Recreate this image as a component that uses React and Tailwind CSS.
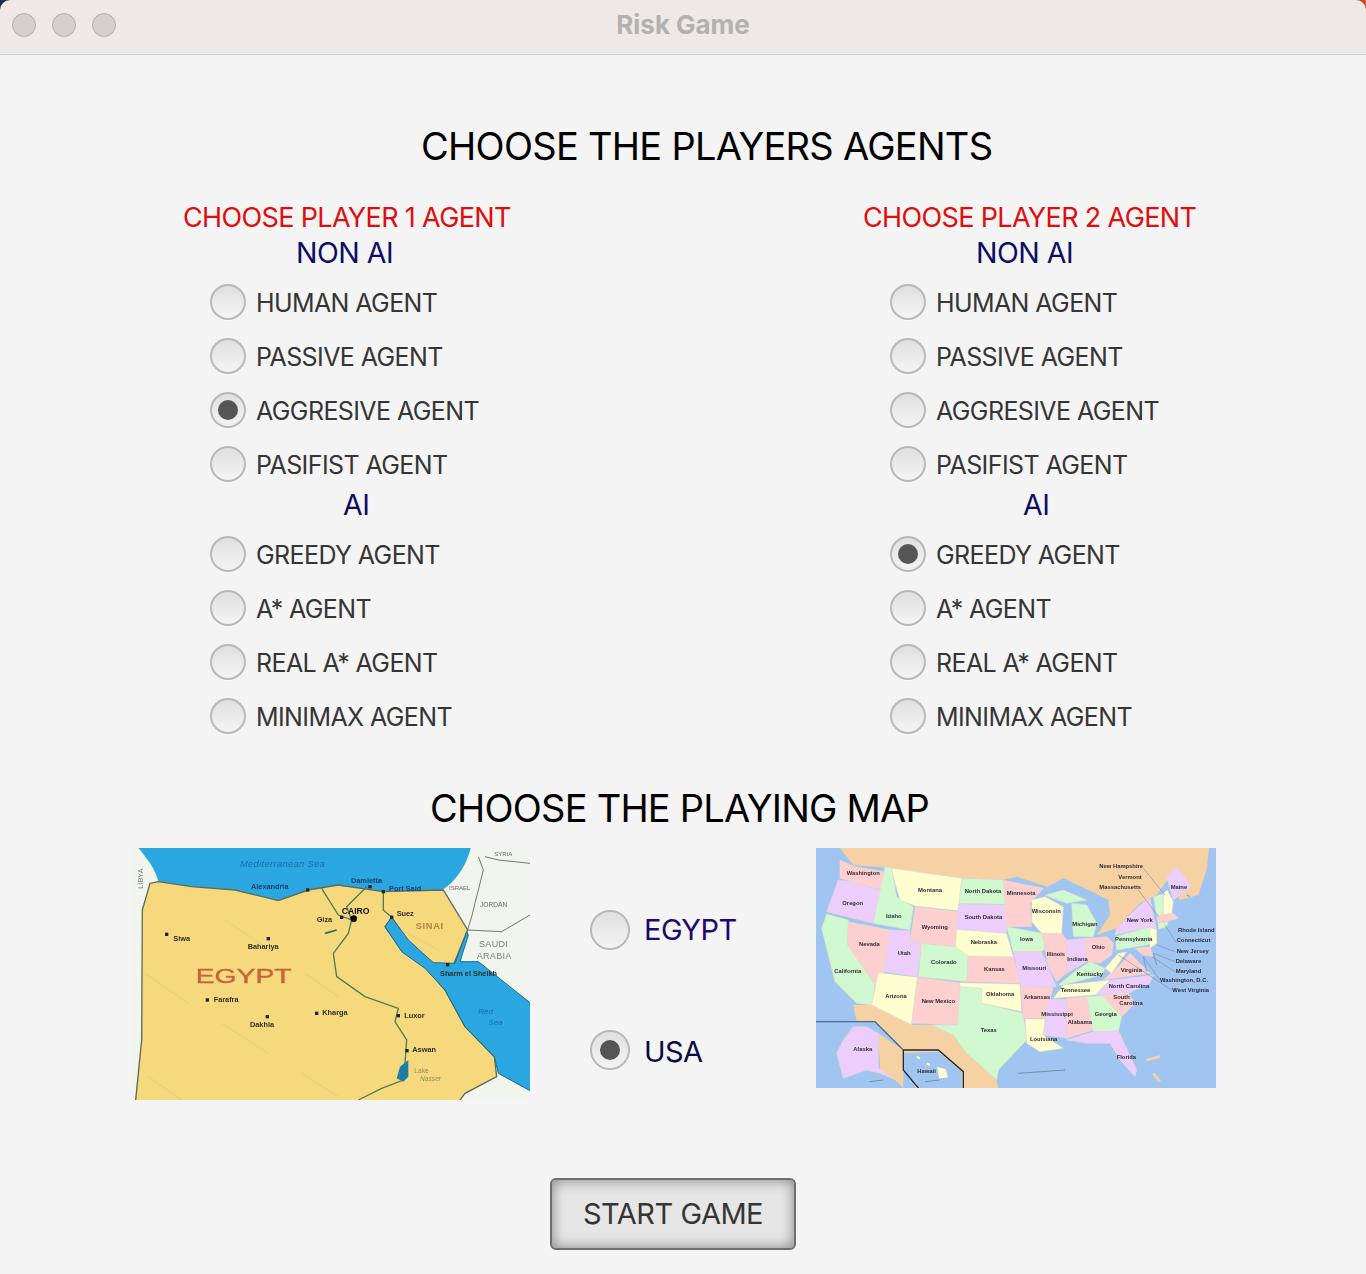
const FONT = { fontFamily: 'Inter, "Noto Sans", sans-serif' };

function Radio({ checked, big }) {
  return (
    <span className={`flex shrink-0 items-center justify-center rounded-full border-[2px] border-[#b9b9b9] bg-linear-to-b from-[#e0e0e0] to-[#f4f4f4] shadow-[0_1px_0_#fafafa] ${big ? 'h-[40px] w-[40px]' : 'h-[36px] w-[36px]'}`}>
      {checked && <span className="h-[20px] w-[20px] rounded-full bg-[#555555]" />}
    </span>
  );
}

function AgentRow({ label, checked }) {
  return (
    <div className="flex h-[54px] items-center gap-[10px] pl-[27px] text-[25px] tracking-[-0.6px] text-[#353535]">
      <Radio checked={checked} />
      <span className="pt-[4px]">{label}</span>
    </div>
  );
}

function Column({ n, selected }) {
  return (
    <div className="w-[680px] pl-[183px]">
      <div className="h-[36px] text-[27px] leading-[36px] tracking-[-0.65px] whitespace-nowrap text-[#e00d0d]">CHOOSE PLAYER {n} AGENT</div>
      <div className="h-[34px] pl-[113px] text-[28.5px] leading-[34px] tracking-[-0.5px] text-[#0d0d66]">NON AI</div>
      <div className="mt-[5px]">
        {['HUMAN AGENT', 'PASSIVE AGENT', 'AGGRESIVE AGENT', 'PASIFIST AGENT'].map((l) => (
          <AgentRow key={l} label={l} checked={selected === l} />
        ))}
      </div>
      <div className="h-[36px] pl-[160px] text-[28.5px] leading-[28px] tracking-[-0.5px] text-[#0d0d66]">AI</div>
      <div>
        {['GREEDY AGENT', 'A* AGENT', 'REAL A* AGENT', 'MINIMAX AGENT'].map((l) => (
          <AgentRow key={l} label={l} checked={selected === l} />
        ))}
      </div>
    </div>
  );
}

function EgyptMap() {
  const dots = [[125, 283, 'Siwa', 145, 297], [430, 296, 'Bahariya', 368, 320], [247, 480, 'Farafra', 266, 480], [427, 530, 'Dakhla', 375, 554], [575, 520, 'Kharga', 592, 518], [820, 527, 'Luxor', 838, 528], [846, 632, 'Aswan', 862, 630], [650, 232, 'Giza', 575, 240], [548, 150, 'Alexandria', 378, 140], [775, 155, 'Port Said', 792, 147], [735, 140, 'Damietta', 678, 122], [800, 232, 'Suez', 815, 220], [968, 374, 'Sharm el Sheikh', 945, 402]];
  return (
    <svg width="399" height="252" viewBox="18 24 1197 756" className="shrink-0">
      <defs><filter id="eg" x="-5%" y="-5%" width="110%" height="110%"><feGaussianBlur stdDeviation="1.7" /></filter></defs>
      <g filter="url(#eg)">
        <rect x="0" y="0" width="1240" height="800" fill="#f2f4ee" />
        <path d="M30 10 L1040 10 C1030 70 990 130 950 150 L775 155 L640 135 L550 150 L460 182 L330 150 L200 140 L100 125 C90 80 60 50 30 10Z" fill="#29a7e0" />
        <path d="M75 130 L100 125 L200 140 L330 150 L460 182 L550 150 L640 135 L775 155 L955 150 L1028 270 L985 375 L900 375 L830 330 L780 260 L800 232 L900 380 L960 450 L1020 560 L1108 650 L1115 710 L1020 760 L990 800 L30 800 L50 600 L52 210Z" fill="#f6d97c" stroke="#5f6a58" strokeWidth="4" />
        <path d="M780 260 L800 232 L850 300 L925 368 L990 370 L1025 275 L1030 285 L1005 365 L1060 365 L1230 500 L1230 760 L1120 700 L1108 650 L1020 560 L960 450 L900 385 L830 335Z" fill="#29a7e0" stroke="#24677f" strokeWidth="3" />
        <path d="M955 150 L1028 270 L1130 275 L1215 225 M1060 50 L1075 90 L1040 230 L1028 270 M1080 50 L1120 60 L1215 70" fill="none" stroke="#74786f" strokeWidth="3" />
        <path d="M590 145 L640 225 L680 240 L670 280 L625 340 L635 410 L720 470 L820 505 L810 545 L845 600 L840 670 L835 720 L770 745 L700 780" fill="none" stroke="#4b7d58" strokeWidth="4" />
        <path d="M725 140 L665 200 L680 240 M775 155 L775 210 L800 232" fill="none" stroke="#4b7d58" strokeWidth="4" />
        <path d="M825 680 L850 660 L850 710 L835 725 L815 715Z" fill="#1f7ea8" />
        <path d="M600 280 L635 270" stroke="#2d6b55" strokeWidth="5" />
        <g stroke="#e7cf82" strokeWidth="4" opacity="0.8">
          <path d="M300 240 L420 320 M540 400 L640 470 M290 550 L430 640 M530 700 L640 770 M70 710 L170 780 M60 400 L190 490 M830 270 L940 330" />
        </g>
        <circle cx="686" cy="236" r="10" fill="#111" />
        {dots.map(([x, y]) => <rect key={`${x}-${y}`} x={x - 5} y={y - 5} width="10" height="10" fill="#222" />)}
        {dots.map(([x, y, t, tx, ty]) => (
          <text key={t} x={tx} y={ty + 7} fontSize="22" fontWeight="700" fill={t === 'Alexandria' || t === 'Port Said' || t === 'Damietta' ? '#123e70' : '#2f2e26'} fontFamily="Liberation Sans, sans-serif">{t}</text>
        ))}
        <text x="650" y="222" fontSize="26" fontWeight="700" fill="#111" fontFamily="Liberation Sans, sans-serif">CAIRO</text>
        <text x="212" y="428" fontSize="60" fill="#c8623a" textLength="288" lengthAdjust="spacingAndGlyphs" stroke="#c8623a" strokeWidth="1" fontFamily="Liberation Sans, sans-serif">EGYPT</text>
        <text x="872" y="268" fontSize="28" letterSpacing="2" fontWeight="700" fill="#b5813f" fontFamily="Liberation Sans, sans-serif">SINAI</text>
        <text x="345" y="82" fontSize="28" fontStyle="italic" letterSpacing="1" fill="#1a6ea8" fontFamily="Liberation Sans, sans-serif">Mediterranean Sea</text>
        <text x="1060" y="522" fontSize="24" fontStyle="italic" fill="#1a6ea8" fontFamily="Liberation Sans, sans-serif">Red</text>
        <text x="1090" y="556" fontSize="24" fontStyle="italic" fill="#1a6ea8" fontFamily="Liberation Sans, sans-serif">Sea</text>
        <text x="1062" y="320" fontSize="27" fill="#7c7f78" letterSpacing="1" fontFamily="Liberation Sans, sans-serif">SAUDI</text>
        <text x="1055" y="356" fontSize="27" fill="#7c7f78" letterSpacing="1" fontFamily="Liberation Sans, sans-serif">ARABIA</text>
        <text x="1065" y="200" fontSize="20" fill="#66685f" fontFamily="Liberation Sans, sans-serif">JORDAN</text>
        <text x="972" y="150" fontSize="18" fill="#66685f" fontFamily="Liberation Sans, sans-serif">ISRAEL</text>
        <text x="1108" y="48" fontSize="18" fill="#66685f" fontFamily="Liberation Sans, sans-serif">SYRIA</text>
        <text x="868" y="698" fontSize="20" fill="#8b8d6e" fontFamily="Liberation Sans, sans-serif">Lake</text>
        <text x="885" y="722" fontSize="20" fontStyle="italic" fill="#8b8d6e" fontFamily="Liberation Sans, sans-serif">Nasser</text>
        <text x="0" y="0" transform="translate(54 146) rotate(-90)" fontSize="22" fill="#7c7f78" fontFamily="Liberation Sans, sans-serif">LIBYA</text>
      </g>
    </svg>
  );
}

const PINK = '#fdcfcf', PURPLE = '#eccdfb', GREEN = '#d0f9cf', YELLOW = '#fefed0';
const STATES = [
  [PINK, '90,60 135,80 225,95 215,150 125,125 90,115'],
  [PURPLE, '85,120 125,125 215,152 190,250 50,215'],
  [GREEN, '50,222 115,240 112,310 195,435 185,495 140,490 75,425 35,265'],
  [PINK, '115,245 240,270 222,400 200,440 112,315'],
  [GREEN, '225,80 245,85 260,170 310,200 300,270 190,250'],
  [YELLOW, '245,85 455,115 445,212 315,198 270,180 255,130'],
  [PINK, '315,200 445,215 437,320 300,305'],
  [PURPLE, '240,270 300,272 300,305 335,310 322,410 222,395'],
  [GREEN, '335,310 475,325 470,425 325,410'],
  [YELLOW, '205,398 322,412 305,555 185,495'],
  [PINK, '322,412 450,428 443,555 305,550'],
  [GREEN, '450,440 515,445 515,490 640,520 650,600 565,690 560,720 470,640 430,585 365,555 443,555'],
  [YELLOW, '450,428 630,432 635,515 515,490 515,445 450,440'],
  [PINK, '475,348 610,350 630,430 470,425'],
  [YELLOW, '440,268 590,280 610,350 475,348 437,320'],
  [PURPLE, '445,192 590,195 590,280 440,268'],
  [GREEN, '455,115 578,120 588,193 447,190'],
  [PINK, '578,120 700,145 660,190 665,260 590,260'],
  [GREEN, '590,260 695,280 715,315 695,335 610,335'],
  [PURPLE, '610,335 695,335 730,420 740,440 632,442'],
  [PINK, '632,442 730,442 705,535 640,535'],
  [YELLOW, '645,537 705,537 700,585 760,625 690,635 650,610'],
  [PURPLE, '715,478 770,478 770,595 700,585'],
  [PINK, '770,475 830,470 850,570 770,595'],
  [GREEN, '830,470 900,465 935,530 925,575 850,575'],
  [PURPLE, '770,600 850,575 925,572 980,690 975,710 930,660 900,610 830,610'],
  [PINK, '875,465 955,460 975,490 935,530'],
  [PURPLE, '855,465 905,420 1030,405 1020,430 955,460'],
  [YELLOW, '730,475 760,435 900,420 855,465'],
  [GREEN, '745,435 800,390 840,365 885,385 875,405 760,435'],
  [PINK, '880,420 925,380 960,340 1020,400'],
  [YELLOW, '885,385 925,340 950,335 905,400'],
  [PINK, '825,295 890,290 910,310 905,345 870,370 830,365'],
  [PURPLE, '770,300 825,295 830,365 770,400'],
  [PINK, '695,280 755,280 770,300 770,400 740,425 715,380'],
  [YELLOW, '665,180 705,170 760,200 755,280 695,280 665,245'],
  [GREEN, '785,190 830,195 860,250 850,290 790,290'],
  [GREEN, '705,165 760,150 830,180 770,190 730,175'],
  [GREEN, '915,290 1020,260 1040,310 920,330'],
  [PURPLE, '920,265 990,195 1020,175 1040,270 1020,260 915,285'],
  [PURPLE, '1070,110 1100,80 1145,140 1090,180'],
  [GREEN, '1030,170 1058,162 1060,225 1040,225'],
  [YELLOW, '1060,160 1072,150 1090,185 1085,222 1060,225'],
  [PINK, '1040,225 1090,220 1105,235 1045,250'],
  [GREEN, '1045,250 1075,245 1070,260 1045,268'],
  [YELLOW, '1020,262 1040,270 1040,310 1020,325'],
  [PINK, '975,325 1020,320 1030,350 1000,345'],
  [PURPLE, '130,560 170,560 205,580 205,685 260,720 210,700 170,690 100,715 80,640 100,600'],
];
const USA_LABELS = [
  ['Washington', 110, 105], ['Oregon', 97, 194], ['Idaho', 228, 233], ['Montana', 324, 156], ['North Dakota', 464, 160], ['Minnesota', 590, 164], ['Wisconsin', 665, 220], ['South Dakota', 464, 237], ['Wyoming', 335, 267], ['Nevada', 147, 318], ['Utah', 263, 345], ['Colorado', 363, 372], ['Nebraska', 482, 311], ['Iowa', 630, 304], ['Illinois', 710, 347], ['Indiana', 772, 364], ['Ohio', 845, 328], ['Michigan', 787, 258], ['New York', 950, 247], ['Pennsylvania', 915, 302], ['California', 73, 398], ['Kansas', 522, 392], ['Missouri', 637, 390], ['Kentucky', 800, 407], ['Virginia', 932, 397], ['Arizona', 226, 474], ['New Mexico', 335, 490], ['Oklahoma', 528, 467], ['Arkansas', 642, 476], ['Tennessee', 752, 456], ['North Carolina', 896, 444], ['South', 910, 476], ['Carolina', 928, 496], ['Mississippi', 694, 528], ['Alabama', 773, 551], ['Georgia', 854, 529], ['Texas', 512, 575], ['Louisiana', 660, 602], ['Florida', 920, 658], ['Alaska', 130, 632], ['Hawaii', 322, 698], ['New Hampshire', 868, 84], ['Vermont', 925, 116], ['Massachusetts', 868, 146], ['Maine', 1082, 146], ['Rhode Island', 1104, 276], ['Connecticut', 1100, 306], ['New Jersey', 1100, 338], ['Delaware', 1097, 368], ['Maryland', 1097, 398], ['Washington, D.C.', 1050, 425], ['West Virginia', 1087, 455],
];

function UsaMap() {
  return (
    <svg width="400" height="240" viewBox="18 24 1200 720" className="shrink-0">
      <defs><filter id="us" x="-5%" y="-5%" width="110%" height="110%"><feGaussianBlur stdDeviation="1.9" /></filter></defs>
      <g filter="url(#us)">
        <rect x="0" y="0" width="1240" height="770" fill="#9fc5f0" />
        <path d="M70 0 L1200 0 L1190 90 L1165 165 L1110 180 L1072 120 L1040 165 L990 190 L920 265 L860 285 L900 225 L895 180 L835 150 L760 115 L712 140 L620 110 L580 120 L455 115 L245 85 L130 75Z" fill="#f5d1a3" />
        <path d="M130 495 L185 495 L305 555 L365 555 L430 585 L470 640 L560 720 L570 770 L325 770 L280 630 L195 545 L140 545Z" fill="#f5d1a3" />
        <path d="M205 580 L280 630 L280 744 L255 720 L210 690Z" fill="#f5d1a3" />
        {STATES.map(([c, p], i) => <polygon key={i} points={p} fill={c} stroke="#e6dccb" strokeWidth="1.5" />)}
        <path d="M1000 350 L1010 395 M1030 340 L1040 375 M1130 165 L1140 170" stroke="#7fa7dc" strokeWidth="4" />
        <path d="M18 545 L195 545 L280 630" fill="none" stroke="#4c6c90" strokeWidth="4" />
        <path d="M280 640 L385 635 L455 695 L455 744 L330 744 L285 690Z" fill="#9fc5f0" />
        <path d="M280 630 L385 630 L460 695 L460 760 M280 630 L280 690 L330 750" fill="none" stroke="#1e2a3a" strokeWidth="4" />
        <path d="M320 650 L330 655 M350 670 L360 675 M385 685 L405 690 L410 710 L390 712Z" stroke="#fefed0" strokeWidth="6" fill="#fefed0" />
        <path d="M1010 660 L1050 650 M1030 700 L1050 725" stroke="#f5d1a3" strokeWidth="8" />
        <path d="M625 700 L765 690 M178 725 L220 720 M345 725 L390 720" stroke="#5e6f82" strokeWidth="2" />
        <path d="M1000 85 L1065 165 M985 150 L1045 230 M1065 255 L1100 310 M1040 315 L1095 335 M1030 340 L1095 365 M1025 350 L1095 395 M1000 350 L1050 420 M925 345 L1085 450" stroke="#6f7f91" strokeWidth="1.5" fill="none" />
        {USA_LABELS.map(([t, x, y]) => (
          <text key={t} x={x} y={y} fontSize="17.5" fontWeight="700" fill="#2f2a33" fontFamily="Liberation Sans, sans-serif">{t}</text>
        ))}
      </g>
    </svg>
  );
}

export default function App() {
  return (
    <div className="h-[1274px] w-[1366px] overflow-hidden bg-[linear-gradient(90deg,#1d2a4d_50%,#c8501c_50%)]" style={FONT}>
      <div className="relative flex h-[55px] items-center rounded-t-[10px] border-b border-[#cdcdcd] bg-[#eee9e6] pb-[4px] pl-[12px]">
        <div className="flex gap-[16px]">
          <span className="h-[24px] w-[24px] rounded-full border border-[#b4afab] bg-[#d5d0cd]" />
          <span className="h-[24px] w-[24px] rounded-full border border-[#b4afab] bg-[#d5d0cd]" />
          <span className="h-[24px] w-[24px] rounded-full border border-[#b4afab] bg-[#d5d0cd]" />
        </div>
        <div className="absolute inset-x-0 top-[9px] text-center text-[26px] leading-[32px] font-bold tracking-[-0.05px] text-[#b5b1ae]">Risk Game</div>
      </div>
      <div className="h-[1219px] bg-[#f4f4f4]">
        <div className="pt-[67px] pl-[421px] text-[38px] leading-[48px] tracking-[-0.72px] whitespace-nowrap text-black">CHOOSE THE PLAYERS AGENTS</div>
        <div className="mt-[30px] flex">
          <Column n={1} selected="AGGRESIVE AGENT" />
          <Column n={2} selected="GREEDY AGENT" />
        </div>
        <div className="mt-[41px] pl-[430px] text-[38px] leading-[48px] tracking-[-0.77px] whitespace-nowrap text-black">CHOOSE THE PLAYING MAP</div>
        <div className="mt-[16px] flex items-start pl-[131px]">
          <EgyptMap />
          <div className="ml-[60px] flex w-[226px] flex-col pt-[61px]">
            <div className="flex items-center gap-[14px] text-[29px] leading-[40px] tracking-[-0.55px] text-[#1f0a6b]">
              <Radio big /><span className="pt-[1px]">EGYPT</span>
            </div>
            <div className="mt-[78px] flex items-center gap-[14px] text-[29px] leading-[40px] tracking-[-0.55px] text-[#0a0a45]">
              <Radio big checked /><span className="pt-[4px]">USA</span>
            </div>
          </div>
          <UsaMap />
        </div>
        <div className="mt-[78px] flex justify-center pr-[20px]">
          <div className="flex h-[72px] w-[246px] items-center justify-center rounded-[6px] border-[2px] border-[#6e6e6e] bg-[#e6e6e6] text-[29px] tracking-[-0.5px] text-[#353535] shadow-[inset_0_0_14px_#808080]">START GAME</div>
        </div>
      </div>
    </div>
  );
}
